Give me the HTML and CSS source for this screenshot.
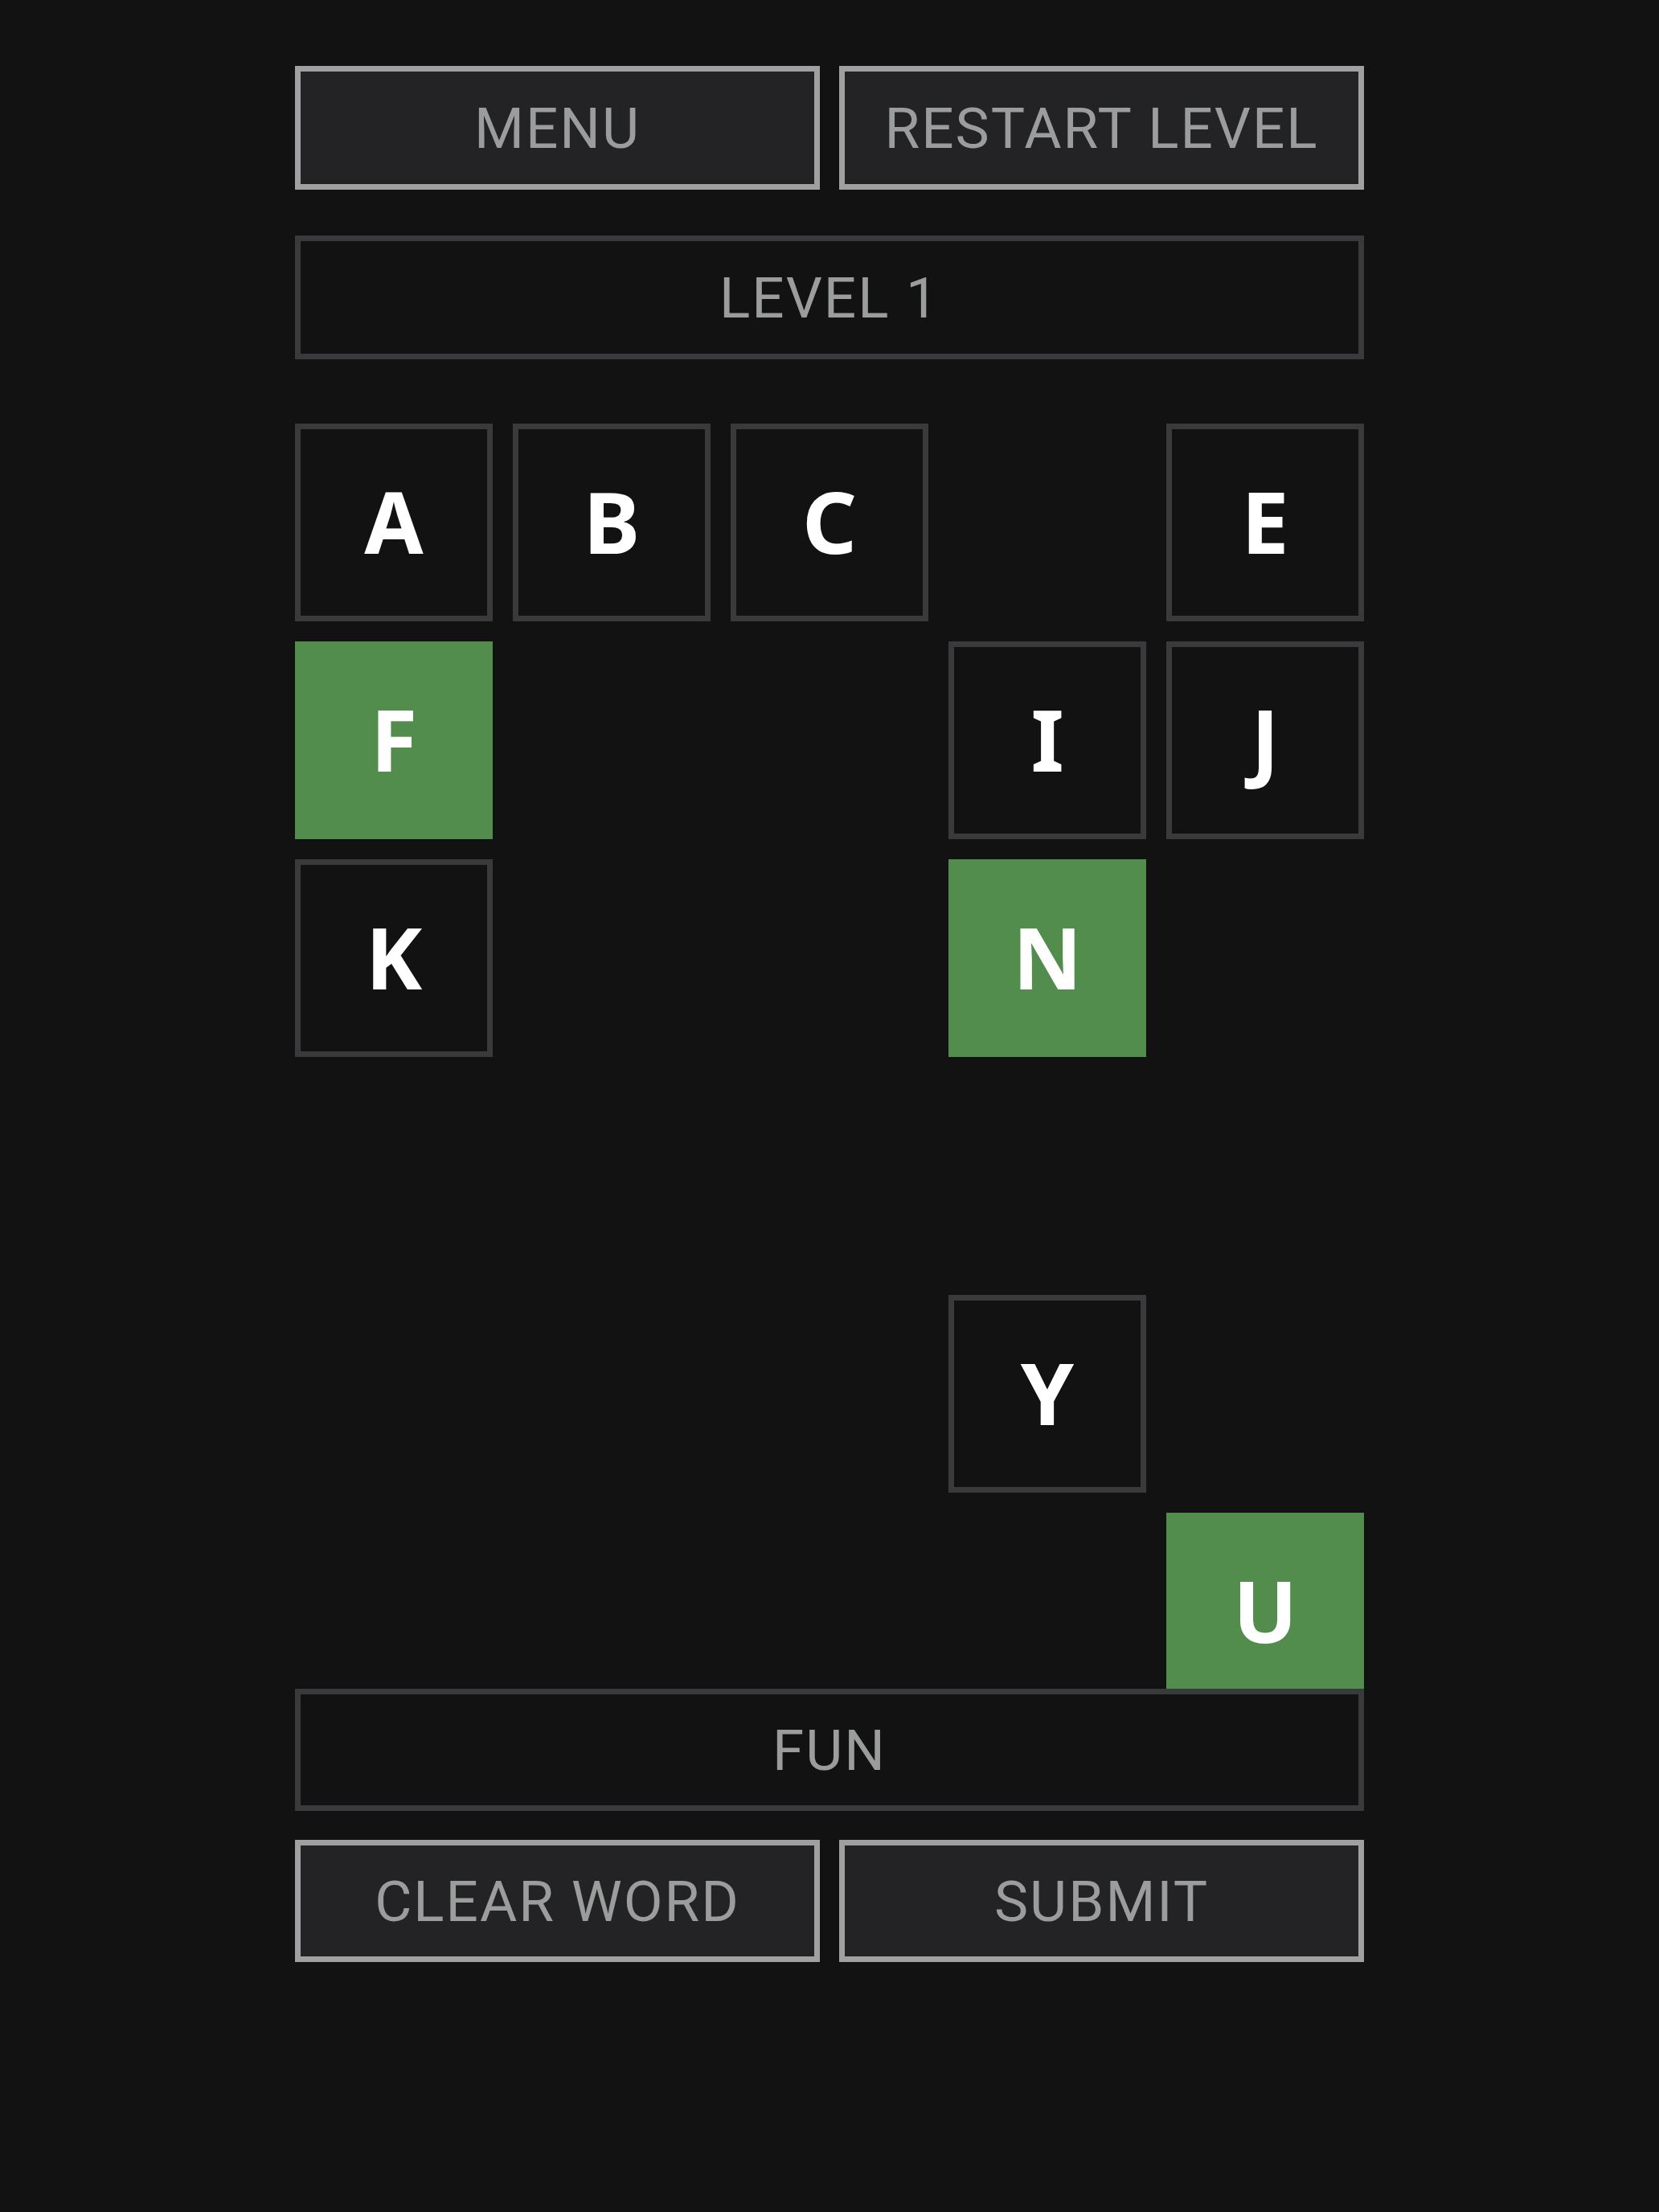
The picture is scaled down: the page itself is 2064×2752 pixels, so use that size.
FILE: index.html
```html
<!DOCTYPE html>
<html>
<head>
<meta charset="utf-8">
<link rel="stylesheet" href="styles.css">
</head>
<body>
<main class="game">
  <div class="row">
    <button class="btn">MENU</button>
    <button class="btn">RESTART LEVEL</button>
  </div>
  <div class="panel level">LEVEL 1</div>
  <div class="board">
    <div class="tile">A</div>
    <div class="tile">B</div>
    <div class="tile">C</div>
    <div class="empty"></div>
    <div class="tile">E</div>

    <div class="tile used">F</div>
    <div class="empty"></div>
    <div class="empty"></div>
    <div class="tile">I</div>
    <div class="tile">J</div>

    <div class="tile">K</div>
    <div class="empty"></div>
    <div class="empty"></div>
    <div class="tile used">N</div>
    <div class="empty"></div>

    <div class="empty"></div>
    <div class="empty"></div>
    <div class="empty"></div>
    <div class="empty"></div>
    <div class="empty"></div>

    <div class="empty"></div>
    <div class="empty"></div>
    <div class="empty"></div>
    <div class="tile">Y</div>
    <div class="empty"></div>

    <div class="empty"></div>
    <div class="empty"></div>
    <div class="empty"></div>
    <div class="empty"></div>
    <div class="tile used">U</div>
  </div>
  <div class="panel word">FUN</div>
  <div class="row bottom">
    <button class="btn">CLEAR WORD</button>
    <button class="btn">SUBMIT</button>
  </div>
</main>
</body>
</html>
```

FILE: styles.css
```css
html, body {
  margin: 0;
  padding: 0;
  background: #121212;
}
body {
  font-family: "Noto Sans", "DejaVu Sans", sans-serif;
  min-height: 2752px;
}
.game {
  width: 1330px;
  margin: 0 auto;
  padding-top: 82px;
}
.row {
  display: flex;
  gap: 24px;
}
.btn {
  flex: 1;
  height: 154px;
  box-sizing: border-box;
  border: 7px solid #a0a0a0;
  background: #232325;
  color: #9b9c9c;
  font-family: Roboto, "Noto Sans", sans-serif;
  font-size: 71px;
  letter-spacing: 2px;
  font-weight: 400;
  padding: 0;
  margin: 0;
}
.panel {
  box-sizing: border-box;
  height: 154px;
  border: 7px solid #3a3a3c;
  background: #121212;
  color: #9b9c9c;
  font-family: Roboto, "Noto Sans", sans-serif;
  font-size: 71px;
  letter-spacing: 2px;
  font-weight: 400;
  display: flex;
  align-items: center;
  justify-content: center;
  position: relative;
}
.level {
  margin-top: 57px;
}
.board {
  margin-top: 80px;
  height: 1574px;
  overflow: hidden;
  display: grid;
  grid-template-columns: repeat(5, 246px);
  grid-auto-rows: 246px;
  gap: 25px;
}
.tile {
  box-sizing: border-box;
  border: 7px solid #3a3a3c;
  color: #ffffff;
  font-family: "Noto Sans", sans-serif;
  font-size: 106px;
  font-weight: 700;
  display: flex;
  align-items: center;
  justify-content: center;
  padding-bottom: 4px;
}
.tile.used {
  border-color: #538d4e;
  background: #538d4e;
}
.word {
  height: 152px;
}
.bottom {
  margin-top: 36px;
}
.bottom .btn {
  height: 152px;
}
```
